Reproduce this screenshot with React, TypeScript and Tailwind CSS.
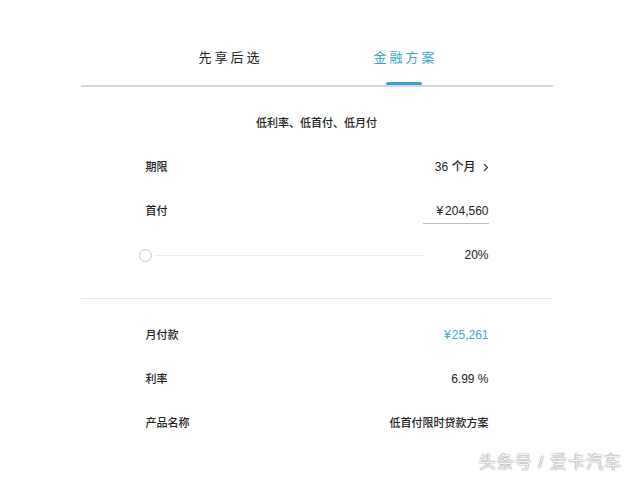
import React from "react";

const FONT = '"Liberation Sans", "Noto Sans CJK SC", sans-serif';

function Row({ label, children }: { label: string; children: React.ReactNode }) {
  return (
    <div className="flex h-[44px] items-center justify-between pl-[65px] pr-[64px]">
      <span className="text-[11px] font-medium text-[#222]">{label}</span>
      {children}
    </div>
  );
}

export default function App() {
  return (
    <div
      className="relative h-[480px] w-[633px] overflow-hidden bg-white text-[#222]"
      style={{ fontFamily: FONT }}
    >
      <div className="mx-auto w-[472px]">
        {/* tabs */}
        <div className="flex justify-center border-b-2 border-[#d6d6d6] pt-[48px]">
          <div className="flex w-[175px] flex-col items-center">
            <span className="h-[20px] pl-[3px] text-[13px] leading-[20px] tracking-[3px] text-[#222]">
              先享后选
            </span>
            <div className="mt-[14px] h-[3px]" />
          </div>
          <div className="flex w-[175px] flex-col items-center">
            <span className="h-[20px] pl-[3px] text-[13px] leading-[20px] tracking-[3px] text-[#3aa3cc]">
              金融方案
            </span>
            <div className="-mb-[2px] mt-[14px] h-[3px] w-[36px] rounded-full bg-[#3a9fcb]" />
          </div>
        </div>

        <div className="mt-[26px] text-center text-[11px] font-medium leading-[20px]">
          低利率、低首付、低月付
        </div>

        <div className="mt-[12px]">
          <Row label="期限">
            <span className="flex items-center gap-[7px] text-[12px] font-medium">
              <span>36 个月</span>
              <svg width="6" height="9" viewBox="0 0 6 9" fill="none">
                <path d="M1 1l3.5 3.5L1 8" stroke="#333" strokeWidth="1.1" />
              </svg>
            </span>
          </Row>
          <Row label="首付">
            <span className="mt-[4px] w-[66px] border-b border-[#bdbdbd] pb-[4px] text-right text-[12px] font-medium leading-[16px]">
              <span className="mr-[2px]">¥</span>204,560
            </span>
          </Row>
          <div className="flex h-[44px] items-center pl-[58px] pr-[64px]">
            <div className="h-[13px] w-[13px] rounded-full border border-[#c8c8c8] bg-white" />
            <div className="ml-[3px] h-px w-[270px] bg-[#ededed]" />
            <span className="ml-auto text-[12px] font-medium">20%</span>
          </div>
        </div>

        <div className="mt-[21px] h-px bg-[#e6e6e6]" />

        <div className="mt-[14px]">
          <Row label="月付款">
            <span className="text-[12px] font-medium text-[#3fa6d1]">
              <span className="mr-[1px]">¥</span>25,261
            </span>
          </Row>
          <Row label="利率">
            <span className="text-[12px] font-medium">6.99 %</span>
          </Row>
          <Row label="产品名称">
            <span className="text-[11px] font-medium">低首付限时贷款方案</span>
          </Row>
        </div>
      </div>

      {/* source watermark */}
      <div className="absolute bottom-[5px] right-[11px] text-[17px] tracking-[1px] text-[#f4f4f4] [text-shadow:0_0_1px_rgba(0,0,0,0.5),0_0_2px_rgba(0,0,0,0.3)]">
        头条号 / 爱卡汽车
      </div>
    </div>
  );
}
